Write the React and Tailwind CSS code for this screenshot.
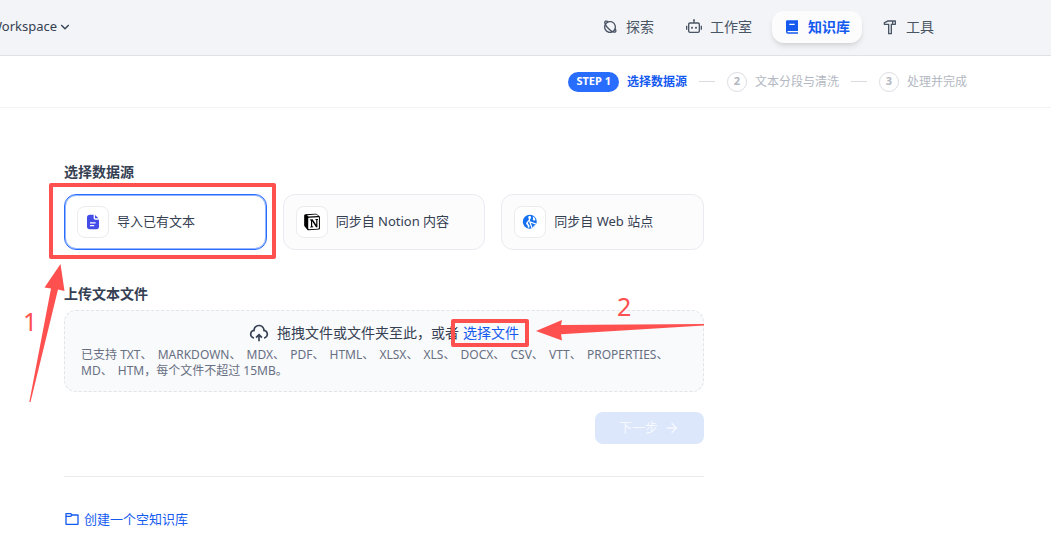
import React, { useRef, useState } from 'react';
import {
  RiArrowDownSLine,
  RiArrowRightLine,
  RiBook2Fill,
  RiFolder6Line,
  RiHammerLine,
  RiPlanetLine,
  RiRobot2Line,
  RiUploadCloud2Line,
} from 'react-icons/ri';
import clsx from 'clsx';

const NAV_ITEMS = [
  { label: '探索', icon: RiPlanetLine },
  { label: '工作室', icon: RiRobot2Line },
  { label: '知识库', icon: RiBook2Fill, active: true },
  { label: '工具', icon: RiHammerLine },
];

const STEPS = ['选择数据源', '文本分段与清洗', '处理并完成'];

const FILE_TYPES = ['TXT', 'MARKDOWN', 'MDX', 'PDF', 'HTML', 'XLSX', 'XLS', 'DOCX', 'CSV', 'VTT', 'PROPERTIES', 'MD'];

const FileIcon = () => (
  <svg width="16" height="16" viewBox="0 0 16 16" aria-hidden="true">
    <path
      fill="#444ce7"
      fillRule="evenodd"
      d="M4.900.700h3.700v3.100c0 1.200.7 1.900 1.900 1.900H14v7.100c0 1.600-.9 2.500-2.500 2.500H4.500C2.900 15.300 2 14.400 2 12.800V3.600C2 1.700 3 .700 4.900.700ZM5 8.300v1.200h5.600V8.300H5Zm0 2.700v1.200h4.200V11H5Z"
    />
    <path fill="#444ce7" d="M10 1v2.700c0 .4.200.6.600.6h2.900L10 1Z" />
  </svg>
);

const NotionIcon = () => (
  <svg width="18" height="18" viewBox="0 0 20 20" aria-hidden="true">
    <path fill="#fff" d="M1.700 1.900 13.800 1 18.600 4.200v13.600L5.300 18.900 1.700 14.500V1.900Z" />
    <path
      fill="#000"
      fillRule="evenodd"
      d="M1.300 2.900c0-.9.500-1.400 1.400-1.500L13.400.700c.7 0 1.100 0 1.700.5l3 2.100c.5.300.7.700.7 1.300v12.300c0 .9-.4 1.400-1.300 1.500L6.300 19.200c-.7 0-1.100-.1-1.500-.6L1.900 15c-.4-.5-.6-.9-.6-1.500V2.900Zm3.200-.3 1.600 1.300 11-.7-2-1.300c-.4-.3-.7-.3-1.200-.3l-9.400.9Zm1.300 3.200v11.400c0 .5.300.8.900.8l10.200-.6c.5 0 .8-.3.800-.9V5.300c0-.5-.3-.8-.8-.7L6.600 5.200c-.5 0-.8.200-.8.600Z"
    />
    <path
      fill="#000"
      d="M7.600 7.200 10.700 7l4 6V7.700l-1-.2v-.8l3-.1v.8l-.7.300v8.100l-1.500.1-4.300-6.600v5.500l1.200.3v.7l-3.400.2v-.7l.9-.4V8.200l-1.300-.2v-.8Z"
    />
  </svg>
);

const WebIcon = () => (
  <svg width="16" height="16" viewBox="0 0 16 16" aria-hidden="true">
    <circle cx="7.800" cy="7.800" r="7" fill="#1570ef" />
    <path fill="#fff" d="M6.700 2h1.700l.7 1.200-.3 1.400-.9 1 .4 1.200-1.200.4-1.300 1.500.5 1.300 1.100 1.200.1 2.400-1.600.2-.3-2.200-1.500-1.500.300-1.700 1.800-1.800L7 5.300l-.8-1.500L6.700 2Z" />
    <path fill="#fff" d="m10.700 2.200 2 1.600.8 2.200-1.500.8-1.400-1.200.600-1.400-.5-2Z" />
    <path fill="#1570ef" stroke="#fff" strokeWidth="1.200" strokeLinejoin="round" d="m7.700 7.700 7.800 2.900-3.300 1.600-1.600 3.300L7.700 7.700Z" />
  </svg>
);

const SOURCES = [
  { id: 'file', label: '导入已有文本', icon: <FileIcon /> },
  { id: 'notion', label: '同步自 Notion 内容', icon: <NotionIcon /> },
  { id: 'web', label: '同步自 Web 站点', icon: <WebIcon /> },
];

const NavItem = ({ label, icon: Icon, active }) => (
  <a
    href="#"
    aria-current={active ? 'page' : undefined}
    className={clsx(
      'flex h-8 items-center gap-2 rounded-xl px-3 text-sm whitespace-nowrap',
      active ? 'bg-[#fcfcfd] font-bold text-[#155aef] shadow-md' : 'text-[#495464]',
    )}
  >
    <Icon className="size-4" />
    {label}
  </a>
);

const Step = ({ index, label }) => {
  const current = index === 0;
  return (
    <li className="flex items-center gap-3 whitespace-nowrap">
      {!current && <span className="h-px w-4 bg-[#d9dbe0]" />}
      <span className="flex items-center gap-2">
        <span
          className={clsx(
            'flex h-5 items-center justify-center rounded-full text-[11px] font-bold',
            current ? 'bg-[#296dff] px-2 text-white' : 'w-5 border border-[#dcdee3] text-[#b3b8c2]',
          )}
        >
          {current ? 'STEP 1' : index + 1}
        </span>
        <span className={clsx('text-xs', current ? 'font-bold text-[#155aef]' : 'text-[#b3b8c2]')}>{label}</span>
      </span>
    </li>
  );
};

const Highlight = ({ className }) => (
  <span className={clsx('pointer-events-none absolute z-10 rounded-xs border-4 border-[#ff5050]', className)} />
);

// Numbered arrows that point at the two highlighted controls
const GuideArrows = () => (
  <svg
    className="pointer-events-none absolute -top-5 -left-10 z-10"
    width="680"
    height="141"
    viewBox="24 262 680 141"
    overflow="visible"
    fill="#ff5050"
  >
    <path d="M60.500 264 44.500 287.500 51 288.500 29.300 402H30.500L58 289.500 64.500 291Z" />
    <path d="M536 331 562 320 561 325 704 324V325.500L561 334.300 562 340.500Z" />
    <text x="23" y="331" fontSize="25">1</text>
    <text x="617" y="316" fontSize="25">2</text>
  </svg>
);

export default function App() {
  const [source, setSource] = useState('file');
  const fileInput = useRef(null);

  return (
    <div className="min-h-screen overflow-x-hidden bg-white font-['Noto_Sans','Noto_Sans_CJK_SC',sans-serif] text-[#354052]">
      <header className="flex h-14 items-center justify-between border-b border-[#dfe1e6] bg-[#f2f4f7] pr-[105px] pb-px">
        <button type="button" className="-ml-2.5 flex items-center text-[13px]">
          Workspace
          <RiArrowDownSLine className="size-4" />
        </button>
        <nav className="flex items-center gap-2">
          {NAV_ITEMS.map((item) => (
            <NavItem key={item.label} {...item} />
          ))}
        </nav>
      </header>

      <div className="flex h-[52px] items-center justify-end border-b border-[#f2f3f5] pr-[84px]">
        <ol className="flex items-center gap-3">
          {STEPS.map((label, index) => (
            <Step key={label} index={index} label={label} />
          ))}
        </ol>
      </div>

      <main className="ml-16 max-w-[640px] pt-[52px] pb-3">
        <section>
          <h2 className="mb-2.5 text-sm leading-6 font-semibold">选择数据源</h2>
          <div className="grid grid-cols-3 gap-4">
            {SOURCES.map(({ id, label, icon }) => (
              <button
                key={id}
                type="button"
                onClick={() => setSource(id)}
                className={clsx(
                  'relative flex h-14 items-center gap-2 rounded-xl border px-3 text-left text-[13px] whitespace-nowrap',
                  source === id
                    ? 'border-[#296dff] bg-white inset-ring inset-ring-[#296dff]/50'
                    : 'border-[#e9ebf0] bg-[#fcfcfd]',
                )}
              >
                <span className="flex size-8 shrink-0 items-center justify-center rounded-lg border border-[#ebecef] bg-white">
                  {icon}
                </span>
                {label}
                {id === 'file' && <Highlight className="-top-3 -right-2.5 -bottom-2.5 -left-4" />}
              </button>
            ))}
          </div>
        </section>

        <section className="relative mt-8">
          <h2 className="mb-1 text-sm leading-6 font-semibold">上传文本文件</h2>
          <div className="rounded-xl border border-dashed border-[#e2e4e9] bg-[#f9fafb] px-4 py-3">
            <div className="flex h-5 items-center justify-center text-sm whitespace-nowrap">
              <RiUploadCloud2Line className="mr-2 size-5" />
              <span>拖拽文件或文件夹至此，或者</span>
              <button
                type="button"
                onClick={() => fileInput.current?.click()}
                className="relative ml-1 text-[#155aef]"
              >
                选择文件
                <Highlight className="-inset-y-1 -right-2.5 -left-3" />
              </button>
              <input ref={fileInput} type="file" multiple aria-label="选择文件" className="hidden" />
            </div>
            <p className="mt-1 text-xs leading-4 text-[#676f83]">
              已支持{' '}
              {FILE_TYPES.map((type) => (
                <React.Fragment key={type}>
                  <span className="mr-0.5">{type}、</span>{' '}
                </React.Fragment>
              ))}
              HTM，每个文件不超过 15MB。
            </p>
          </div>
          <GuideArrows />
        </section>

        <div className="mt-5 flex justify-end">
          <button
            type="button"
            disabled
            className="flex h-8 items-center gap-1.5 rounded-lg bg-[#dce7fc] px-6 text-[13px] text-[#f6f9ff]"
          >
            下一步
            <RiArrowRightLine className="size-4" />
          </button>
        </div>

        <hr className="mt-8 border-[#e9eaed]" />

        <a href="#" className="mt-8 flex w-fit items-center gap-1 text-[13px] leading-5 text-[#155aef]">
          <RiFolder6Line className="size-4" />
          创建一个空知识库
        </a>
      </main>
    </div>
  );
}
